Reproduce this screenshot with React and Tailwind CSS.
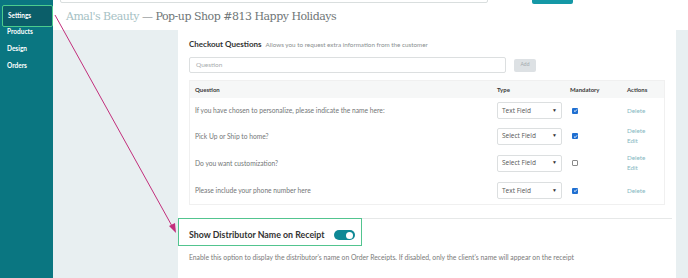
import React from "react";

const rows = [
  { q: "If you have chosen to personalize, please indicate the name here:", type: "Text Field", checked: true, edit: false, h: "h-[25px]" },
  { q: "Pick Up or Ship to home?", type: "Select Field", checked: true, edit: true, h: "h-[26px]" },
  { q: "Do you want customization?", type: "Select Field", checked: false, edit: true, h: "h-[28px]" },
  { q: "Please include your phone number here", type: "Text Field", checked: true, edit: false, h: "h-[27px]" },
];

function Checkbox({ checked }) {
  return checked ? (
    <div className="w-[6px] h-[6px] rounded-[1px] bg-[#1f6fd1] flex items-center justify-center">
      <svg width="5" height="5" viewBox="0 0 10 10"><path d="M2 5.2 L4.2 7.3 L8 2.8" stroke="white" strokeWidth="1.8" fill="none" /></svg>
    </div>
  ) : (
    <div className="w-[6px] h-[6px] rounded-[1px] border border-[#8a8a8a] bg-white" />
  );
}

export default function App() {
  return (
    <div className="relative w-[688px] h-[278px] overflow-hidden flex bg-white" style={{ fontFamily: "Lato, 'Open Sans', sans-serif" }}>
      <aside className="w-[53px] shrink-0 bg-[#0a7681] flex flex-col pt-[5px] text-white font-bold text-[6.5px]">
        <div className="ml-[2px] h-[22px] w-[51px] bg-[#0b5e69] border-[1.5px] border-[#4ccc8d] rounded-[2px] flex items-center pl-[5px]">Settings</div>
        <div className="-mt-[3.5px] h-[17px] flex items-center pl-[7px]">Products</div>
        <div className="h-[17px] flex items-center pl-[7px]">Design</div>
        <div className="h-[17px] flex items-center pl-[7px]">Orders</div>
      </aside>
      <main className="flex-1 flex flex-col">
        <div className="h-[4px] overflow-hidden flex items-end">
          <div className="ml-[7px] w-[428px] h-[20px] mb-[1.5px] shrink-0 border border-[#d9dede] rounded-[2px] bg-white" />
          <div className="ml-[44px] w-[41px] h-[20px] shrink-0 bg-[#1598a6] rounded-[2px]" />
        </div>
        <div className="h-[26px] flex items-center pl-[13px] text-[11px] text-[#6f7677]" style={{ fontFamily: "'DejaVu Serif', serif", letterSpacing: "-0.5px" }}>
          <span className="text-[#a6c1c4]">Amal's Beauty</span>
          <span>&nbsp;— Pop-up Shop #813 Happy Holidays</span>
        </div>
        <div className="flex-1 flex">
          <div className="w-[125px] shrink-0 bg-[#e8eff1]" />
          <div className="w-[498px] shrink-0 bg-white flex flex-col">
            <div className="px-[11px] pt-[8px]">
              <div className="h-[12px] flex items-baseline gap-[4px]">
                <span className="text-[8px] font-bold text-[#333]">Checkout Questions</span>
                <span className="text-[6.3px] text-[#8a8f90]">Allows you to request extra information from the customer</span>
              </div>
              <div className="mt-[7px] flex items-center gap-[8px]">
                <div className="w-[317px] h-[16px] border border-[#dcdfe0] rounded-[2px] flex items-center pl-[6px] text-[6.5px] text-[#a8acad]">Question</div>
                <div className="w-[22px] h-[13px] bg-[#dde1e4] rounded-[2px] flex items-center justify-center text-[5px] text-[#a3a9ad]">Add</div>
              </div>
              <div className="mt-[7px] border border-[#f0f0f0] text-[6.7px]">
                <div className="h-[17px] bg-[#f6f7f7] flex items-center font-bold text-[#3a3a3a] text-[6px]">
                  <div className="w-[303px] pl-[5px]">Question</div>
                  <div className="w-[73px] pl-[4px]">Type</div>
                  <div className="w-[57px] pl-[4px]">Mandatory</div>
                  <div className="flex-1 pl-[4px]">Actions</div>
                </div>
                {rows.map((r, i) => (
                  <div key={i} className={`${r.h} flex items-center`}>
                    <div className="w-[303px] pl-[5px] text-[#737677]">{r.q}</div>
                    <div className="w-[73px] pl-[4px]">
                      <div className="w-[65px] h-[17px] border border-[#dcdfe0] rounded-[2px] flex items-center justify-between px-[4px] text-[6.5px] text-[#555]" style={{ fontFamily: "'Open Sans', sans-serif" }}>
                        <span>{r.type}</span>
                        <span className="text-[5px] text-[#333]">▼</span>
                      </div>
                    </div>
                    <div className="w-[57px] pl-[6px]"><Checkbox checked={r.checked} /></div>
                    <div className="flex-1 pl-[4px] text-[#86b8c2] leading-[10px] text-[6.3px]">
                      <div>Delete</div>
                      {r.edit && <div>Edit</div>}
                    </div>
                  </div>
                ))}
              </div>
            </div>
            <div className="mt-[13px] w-[494px] h-px bg-[#e6e8e8]" />
            <div className="-mt-[1px] w-[184px] h-[28px] border-[1.5px] border-[#52c48f] flex items-center pl-[10px] pt-[6px] gap-[9px]">
              <span className="text-[8.8px] font-bold text-[#333] whitespace-nowrap">Show Distributor Name on Receipt</span>
              <div className="w-[21px] h-[10px] shrink-0 rounded-full bg-[#0e8895] flex items-center justify-end pr-[1.5px]">
                <div className="w-[7px] h-[7px] rounded-full bg-white" />
              </div>
            </div>
            <div className="pl-[11px] mt-[6px] text-[6.8px] text-[#7a7a7a] whitespace-nowrap">Enable this option to display the distributor's name on Order Receipts. If disabled, only the client's name will appear on the receipt</div>
          </div>
          <div className="flex-1 bg-[#e8eff1]" />
        </div>
      </main>
      <svg className="absolute left-0 top-0 pointer-events-none" width="688" height="278">
        <line x1="55" y1="15" x2="172" y2="226" stroke="#c22f7c" strokeWidth="1" />
        <polygon points="176,233 169,226 175,223" fill="#c22f7c" />
      </svg>
    </div>
  );
}
